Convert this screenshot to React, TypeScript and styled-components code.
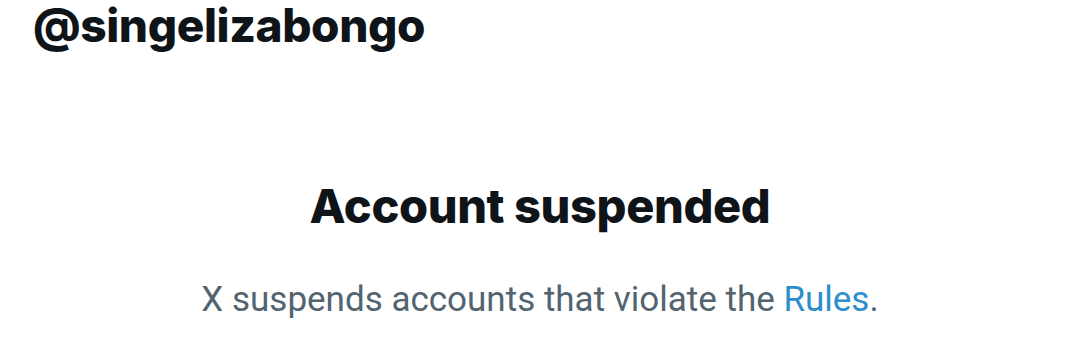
import React from "react";
import styled, { createGlobalStyle } from "styled-components";

const Global = createGlobalStyle`
  html, body { margin: 0; padding: 0; background: #ffffff; }
  body { width: 1080px; height: 360px; overflow: hidden; }
`;

const Page = styled.div`
  width: 1080px;
  height: 360px;
  display: flex;
  flex-direction: column;
  box-sizing: border-box;
  background: #ffffff;
`;

const Handle = styled.h1`
  margin: 0;
  padding: 0 0 0 33px;
  font-family: Inter, "Liberation Sans", sans-serif;
  font-weight: 800;
  font-size: 46px;
  line-height: 50px;
  color: #0f1419;
  letter-spacing: -0.4px;
`;

const Notice = styled.section`
  display: flex;
  flex-direction: column;
  align-items: center;
  padding-top: 128px;
`;

const Title = styled.h2`
  margin: 0;
  font-family: Inter, "Liberation Sans", sans-serif;
  font-weight: 800;
  font-size: 47px;
  line-height: 56px;
  color: #0f1419;
  letter-spacing: -0.4px;
`;

const Message = styled.p`
  margin: 44px 0 0;
  font-family: Roboto, "Liberation Sans", sans-serif;
  font-weight: 400;
  font-size: 35px;
  line-height: 44px;
  color: #536471;
`;

const Link = styled.a`
  color: #2b8fcc;
  text-decoration: none;
`;

export default function App() {
  return (
    <>
      <Global />
      <Page>
        <Handle>@singelizabongo</Handle>
        <Notice>
          <Title>Account suspended</Title>
          <Message>
            X suspends accounts that violate the <Link href="#">Rules</Link>.
          </Message>
        </Notice>
      </Page>
    </>
  );
}
